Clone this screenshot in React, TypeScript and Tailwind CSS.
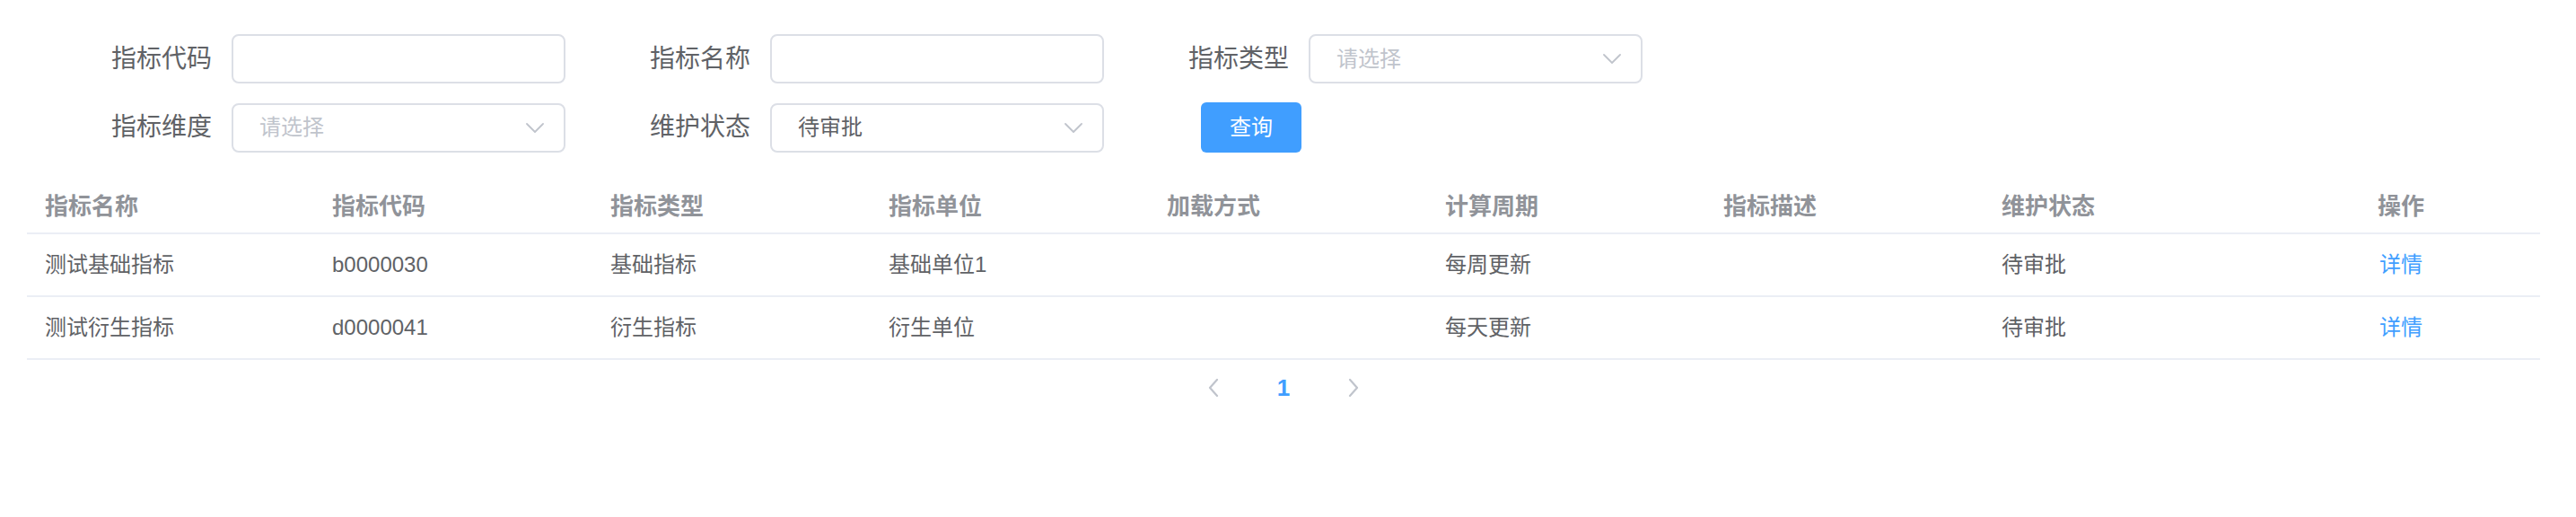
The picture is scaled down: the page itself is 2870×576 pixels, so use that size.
import React from "react";

function Chevron() {
  return (
    <svg width="20" height="11" viewBox="0 0 20 11" fill="none" className="shrink-0">
      <path d="M1 1 L10 10 L19 1" stroke="#c0c4cc" strokeWidth="1.8" strokeLinecap="round" strokeLinejoin="round" />
    </svg>
  );
}

function Label({ children }: { children: React.ReactNode }) {
  return (
    <div className="w-[228px] pr-[22px] text-right text-[28px] leading-none text-[#606266]">{children}</div>
  );
}

function TextInput() {
  return <div className="w-[372px] h-[55px] border-2 border-[#dcdfe6] rounded-[8px] bg-white" />;
}

function Select({ value, placeholder }: { value?: string; placeholder?: string }) {
  return (
    <div className="w-[372px] h-[55px] border-2 border-[#dcdfe6] rounded-[8px] bg-white flex items-center pl-[29px] pr-[22px]">
      <span className={"flex-1 text-[24px] leading-none " + (value ? "text-[#606266]" : "text-[#c0c4cc]")}>
        {value ?? placeholder}
      </span>
      <Chevron />
    </div>
  );
}

const headers = ["指标名称", "指标代码", "指标类型", "指标单位", "加载方式", "计算周期", "指标描述", "维护状态"];

const rows = [
  ["测试基础指标", "b0000030", "基础指标", "基础单位1", "", "每周更新", "", "待审批"],
  ["测试衍生指标", "d0000041", "衍生指标", "衍生单位", "", "每天更新", "", "待审批"],
];

export default function App() {
  return (
    <div className="w-[2870px] h-[576px] bg-white font-['Liberation_Sans','Noto_Sans_CJK_SC',sans-serif]">
      <div className="pt-[38px] px-[30px] flex flex-col gap-[21px]">
        <div className="flex">
          <div className="w-[600px] flex items-center">
            <Label>指标代码</Label>
            <TextInput />
          </div>
          <div className="w-[600px] flex items-center">
            <Label>指标名称</Label>
            <TextInput />
          </div>
          <div className="w-[600px] flex items-center">
            <Label>指标类型</Label>
            <Select placeholder="请选择" />
          </div>
        </div>
        <div className="flex">
          <div className="w-[600px] flex items-center">
            <Label>指标维度</Label>
            <Select placeholder="请选择" />
          </div>
          <div className="w-[600px] flex items-center">
            <Label>维护状态</Label>
            <Select value="待审批" />
          </div>
          <div className="w-[600px] flex items-center pl-[108px]">
            <button className="w-[112px] h-[56px] bg-[#409eff] rounded-[6px] text-white text-[24px] leading-none">
              查询
            </button>
          </div>
        </div>
      </div>

      <div className="mt-[31px] ml-[30px] w-[2800px]">
        <div className="grid grid-cols-[320px_repeat(8,310px)] h-[60px] items-center border-b-2 border-[#ebeef5] text-[26px] font-bold text-[#909399] leading-none">
          {headers.map((h) => (
            <div key={h} className="pl-[20px]">{h}</div>
          ))}
          <div className="text-center">操作</div>
        </div>
        {rows.map((r, i) => (
          <div
            key={i}
            className="grid grid-cols-[320px_repeat(8,310px)] h-[70px] items-center border-b-2 border-[#ebeef5] text-[24px] text-[#606266] leading-none"
          >
            {r.map((c, j) => (
              <div key={j} className="pl-[20px]">{c}</div>
            ))}
            <div className="text-center text-[#409eff]">详情</div>
          </div>
        ))}
        <div className="flex justify-center pt-[3px]">
          <div className="w-[78px] h-[56px] flex items-center justify-center">
            <svg width="12" height="20" viewBox="0 0 12 20" fill="none">
              <path d="M10 1 L2 10 L10 19" stroke="#c0c4cc" strokeWidth="2.2" strokeLinecap="round" strokeLinejoin="round" />
            </svg>
          </div>
          <div className="w-[78px] h-[56px] flex items-center justify-center text-[26px] font-bold text-[#409eff] leading-none">
            1
          </div>
          <div className="w-[78px] h-[56px] flex items-center justify-center">
            <svg width="12" height="20" viewBox="0 0 12 20" fill="none">
              <path d="M2 1 L10 10 L2 19" stroke="#c0c4cc" strokeWidth="2.2" strokeLinecap="round" strokeLinejoin="round" />
            </svg>
          </div>
        </div>
      </div>
    </div>
  );
}
